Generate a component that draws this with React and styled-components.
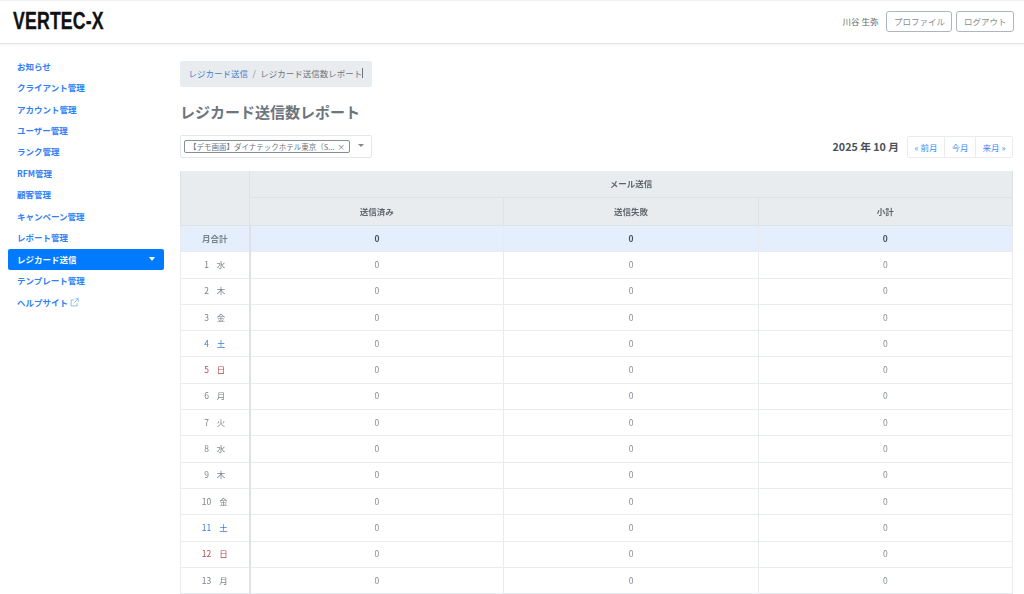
import styled, { createGlobalStyle } from 'styled-components'

const GlobalStyle = createGlobalStyle`
  html, body {
    margin: 0;
    padding: 0;
    height: 594px;
    overflow: hidden;
    background: #fff;
  }
  body {
    font-family: "Noto Sans CJK JP", "Noto Sans", sans-serif;
    color: #6c757d;
  }
`

const Page = styled.div`
  width: 1024px;
  height: 594px;
  overflow: hidden;
  display: flex;
  flex-direction: column;
`

const Header = styled.header`
  flex: none;
  height: 44px;
  box-sizing: border-box;
  display: flex;
  align-items: center;
  justify-content: space-between;
  padding: 0 10px 2px 13px;
  border-top: 1px solid #f1f2f3;
  border-bottom: 1px solid #e4e6e8;
  box-shadow: 0 1px 2px rgba(0, 0, 0, 0.05);
`

const Logo = styled.div`
  font-family: "Liberation Sans", sans-serif;
  font-size: 23px;
  font-weight: 700;
  color: #111;
  -webkit-text-stroke: 0.3px #111;
  transform: scaleX(0.77);
  transform-origin: left center;
  letter-spacing: 0.2px;
`

const UserBox = styled.div`
  display: flex;
  align-items: center;
  font-size: 8.5px;
`

const UserName = styled.span`
  margin-right: 4px;
  color: #666;
`

const OutlineButton = styled.button`
  height: 21px;
  padding: 0 6.5px 1px;
  margin-left: 4px;
  border: 1px solid #adb5bd;
  border-radius: 3px;
  background: #fff;
  color: #868e96;
  font: inherit;
`

const Body = styled.div`
  flex: 1;
  display: flex;
  min-height: 0;
`

const Sidebar = styled.nav`
  flex: none;
  width: 164px;
  box-sizing: border-box;
  padding: 12px 0 0 8px;
  display: flex;
  flex-direction: column;
`

const NavItem = styled.a`
  height: 21.45px;
  box-sizing: border-box;
  display: flex;
  align-items: center;
  justify-content: space-between;
  padding: 0 9px 2px;
  font-size: 8.5px;
  font-weight: 700;
  border-radius: 2px;
  color: ${p => (p.$active ? '#fff' : '#2f80f6')};
  background: ${p => (p.$active ? '#007bff' : 'transparent')};
`

const Caret = styled.i`
  width: 0;
  height: 0;
  border-left: 3.5px solid transparent;
  border-right: 3.5px solid transparent;
  border-top: 4px solid #fff;
`

const HelpIcon = styled.svg`
  width: 9px;
  height: 9px;
  margin-left: 2px;
  vertical-align: -1px;
  fill: none;
  stroke: #6ea8f5;
  stroke-width: 1;
`

const Main = styled.main`
  flex: 1;
  min-width: 0;
  padding: 17px 11px 0 16px;
`

const Breadcrumb = styled.div`
  display: flex;
  align-items: center;
  height: 26px;
  box-sizing: border-box;
  width: 192px;
  padding: 0 8.5px 2px;
  background: #e9ecef;
  border-radius: 2px;
  font-size: 8.5px;
  white-space: nowrap;
`

const CrumbLink = styled.span`
  color: #3f7fd0;
`

const CrumbSep = styled.span`
  margin: 0 4.5px;
  color: #868e96;
`

const CrumbCurrent = styled.span`
  border-right: 1px solid #6c757d;
  line-height: 10px;
`

const Title = styled.h1`
  margin: 14px 0 0;
  padding-bottom: 1px;
  font-size: 15px;
  font-weight: 700;
  line-height: 22px;
  color: #6c757d;
`

const Toolbar = styled.div`
  display: flex;
  align-items: flex-start;
  justify-content: space-between;
  margin-top: 11px;
  height: 23px;
`

const Select = styled.div`
  width: 192px;
  height: 23px;
  box-sizing: border-box;
  display: flex;
  align-items: center;
  padding: 0 0 1px 3px;
  border: 1px solid #e4e7ea;
  border-radius: 2px;
`

const Chip = styled.div`
  width: 166px;
  height: 13px;
  box-sizing: border-box;
  display: flex;
  align-items: center;
  justify-content: space-between;
  padding: 0 4px;
  border: 1px solid #868e96;
  border-radius: 2px;
  font-size: 7.5px;
  white-space: nowrap;
  overflow: hidden;
`

const SelectCaret = styled.i`
  align-self: flex-start;
  margin: 8px 0 0 8px;
  width: 0;
  height: 0;
  border-left: 3px solid transparent;
  border-right: 3px solid transparent;
  border-top: 3px solid #888;
`

const MonthNav = styled.div`
  display: flex;
  align-items: center;
`

const MonthLabel = styled.span`
  margin-right: 8px;
  font-size: 10.7px;
  font-weight: 700;
  color: #495057;
`

const MonthGroup = styled.div`
  display: flex;
  height: 20px;
  margin-top: 1px;
  border: 1px solid #e9ecef;
  border-radius: 2px;
`

const MonthLink = styled.span`
  padding: 0 6.5px 1px;
  display: flex;
  align-items: center;
  font-size: 8.5px;
  color: #3b8bf7;
  & + & {
    border-left: 1px solid #e9ecef;
  }
`

const Grid = styled.table`
  width: 833px;
  margin-top: 13px;
  border-collapse: collapse;
  table-layout: fixed;
  font-size: 8.5px;
  text-align: center;
  will-change: opacity;
`

const HeadCell = styled.th`
  height: ${p => p.$height || '24px'};
  padding: 0 0 2px;
  background: #e9ecef;
  border: 1px solid #dee2e6;
  border-top: 0;
  font-size: 8.5px;
  font-weight: 700;
  color: #5f676e;
  width: ${p => p.$width || 'auto'};
`

const DayCell = styled.td`
  height: 23.3px;
  padding: 0 0 2px;
  border: 1px solid #e9ecef;
  border-right: 2px solid #dee2e6;
  color: ${p => p.$color || '#7b838a'};
  background: ${p => (p.$total ? '#e4eefd' : '#fff')};
  font-weight: ${p => (p.$total ? 700 : 400)};
`

const DayNum = styled.span`
  margin-right: 8px;
`

const ValueCell = styled.td`
  padding: 0 0 2px;
  border: 1px solid #e9ecef;
  color: ${p => (p.$total ? '#495057' : '#868e96')};
  background: ${p => (p.$total ? '#e4eefd' : '#fff')};
  font-weight: ${p => (p.$total ? 700 : 400)};
`

const navItems = [
  'お知らせ', 'クライアント管理', 'アカウント管理', 'ユーザー管理', 'ランク管理', 'RFM管理',
  '顧客管理', 'キャンペーン管理', 'レポート管理', 'レジカード送信', 'テンプレート管理',
]

const days = [
  [1, '水'], [2, '木'], [3, '金'], [4, '土'], [5, '日'], [6, '月'], [7, '火'],
  [8, '水'], [9, '木'], [10, '金'], [11, '土'], [12, '日'], [13, '月'],
]

const dayColor = w => (w === '土' ? '#3b7fd9' : w === '日' ? '#b8484e' : undefined)

export default function App() {
  return (
    <Page>
      <GlobalStyle />
      <Header>
        <Logo>VERTEC-X</Logo>
        <UserBox>
          <UserName>川谷 生弥</UserName>
          <OutlineButton>プロファイル</OutlineButton>
          <OutlineButton>ログアウト</OutlineButton>
        </UserBox>
      </Header>
      <Body>
        <Sidebar>
          {navItems.map(item => (
            <NavItem key={item} $active={item === 'レジカード送信'}>
              {item}
              {item === 'レジカード送信' && <Caret />}
            </NavItem>
          ))}
          <NavItem>
            <span>
              ヘルプサイト
              <HelpIcon viewBox="0 0 12 12">
                <path d="M9.5 7v3.5h-8v-8H5M7 1h4v4M11 1L5.5 6.5" />
              </HelpIcon>
            </span>
          </NavItem>
        </Sidebar>
        <Main>
          <Breadcrumb>
            <CrumbLink>レジカード送信</CrumbLink>
            <CrumbSep>/</CrumbSep>
            <CrumbCurrent>レジカード送信数レポート</CrumbCurrent>
          </Breadcrumb>
          <Title>レジカード送信数レポート</Title>
          <Toolbar>
            <Select>
              <Chip>
                <span>【デモ画面】ダイナテックホテル東京（S...</span>
                <span>×</span>
              </Chip>
              <SelectCaret />
            </Select>
            <MonthNav>
              <MonthLabel>2025 年 10 月</MonthLabel>
              <MonthGroup>
                <MonthLink>« 前月</MonthLink>
                <MonthLink>今月</MonthLink>
                <MonthLink>来月 »</MonthLink>
              </MonthGroup>
            </MonthNav>
          </Toolbar>
          <Grid>
            <thead>
              <tr>
                <HeadCell rowSpan={2} $width="68px" />
                <HeadCell colSpan={3}>メール送信</HeadCell>
              </tr>
              <tr>
                <HeadCell $height="25px">送信済み</HeadCell>
                <HeadCell $height="25px">送信失敗</HeadCell>
                <HeadCell $height="25px">小計</HeadCell>
              </tr>
            </thead>
            <tbody>
              <tr>
                <DayCell $total>月合計</DayCell>
                <ValueCell $total>0</ValueCell>
                <ValueCell $total>0</ValueCell>
                <ValueCell $total>0</ValueCell>
              </tr>
              {days.map(([d, w]) => (
                <tr key={d}>
                  <DayCell $color={dayColor(w)}>
                    <DayNum>{d}</DayNum>
                    {w}
                  </DayCell>
                  <ValueCell>0</ValueCell>
                  <ValueCell>0</ValueCell>
                  <ValueCell>0</ValueCell>
                </tr>
              ))}
            </tbody>
          </Grid>
        </Main>
      </Body>
    </Page>
  )
}
